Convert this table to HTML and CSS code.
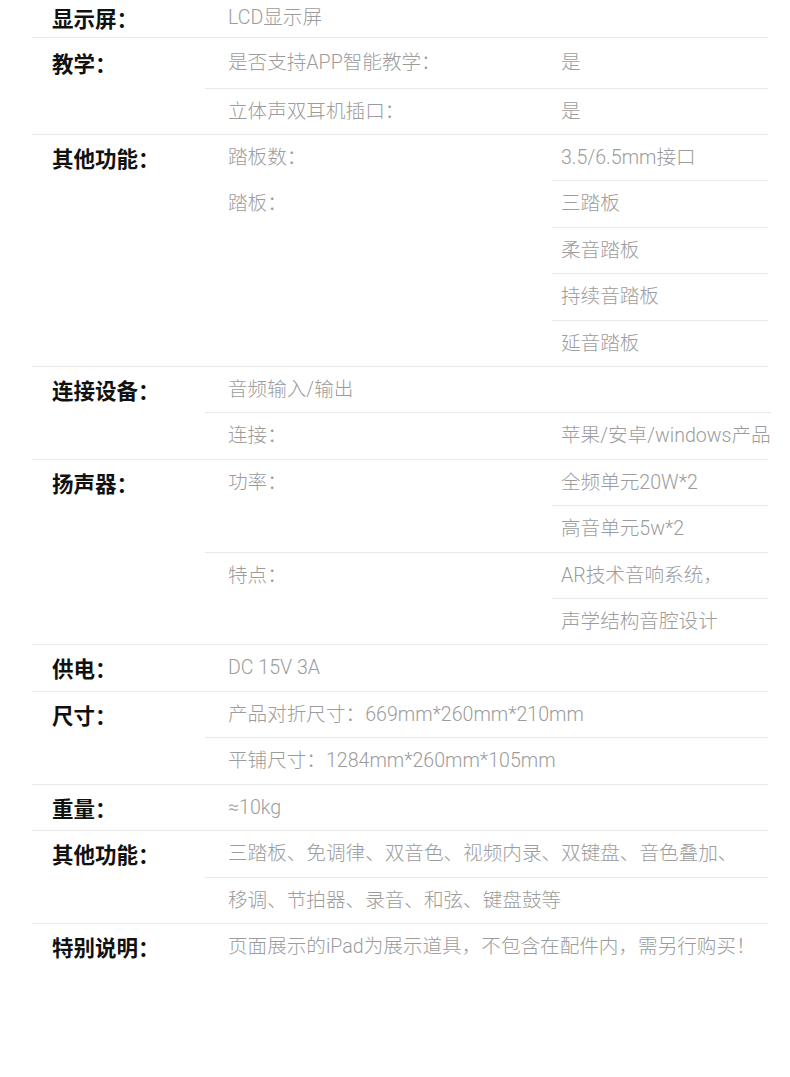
FILE: index.html
```html
<!DOCTYPE html>
<html lang="zh-CN">
<head>
<meta charset="utf-8">
<title>产品参数</title>
<link rel="stylesheet" href="styles.css">
</head>
<body>
<div class="spec">
  <section class="group g-first">
    <div class="label">显示屏：</div>
    <div class="body">
      <div class="row"><div class="k wide">LCD显示屏</div></div>
    </div>
  </section>

  <section class="group g-tall">
    <div class="label">教学：</div>
    <div class="body">
      <div class="row">
        <div class="keys"><div class="k">是否支持APP智能教学：</div></div>
        <div class="vals"><div class="v">是</div></div>
      </div>
      <div class="row">
        <div class="keys"><div class="k">立体声双耳机插口：</div></div>
        <div class="vals"><div class="v">是</div></div>
      </div>
    </div>
  </section>

  <section class="group">
    <div class="label">其他功能：</div>
    <div class="body">
      <div class="row">
        <div class="keys"><div class="k">踏板数：</div><div class="k">踏板：</div></div>
        <div class="vals">
          <div class="v">3.5/6.5mm接口</div>
          <div class="v">三踏板</div>
          <div class="v">柔音踏板</div>
          <div class="v">持续音踏板</div>
          <div class="v">延音踏板</div>
        </div>
      </div>
    </div>
  </section>

  <section class="group">
    <div class="label">连接设备：</div>
    <div class="body">
      <div class="row"><div class="k wide">音频输入/输出</div></div>
      <div class="row">
        <div class="keys"><div class="k">连接：</div></div>
        <div class="vals"><div class="v">苹果/安卓/windows产品</div></div>
      </div>
    </div>
  </section>

  <section class="group">
    <div class="label">扬声器：</div>
    <div class="body">
      <div class="row">
        <div class="keys"><div class="k">功率：</div></div>
        <div class="vals">
          <div class="v">全频单元20W*2</div>
          <div class="v">高音单元5w*2</div>
        </div>
      </div>
      <div class="row">
        <div class="keys"><div class="k">特点：</div></div>
        <div class="vals">
          <div class="v">AR技术音响系统，</div>
          <div class="v">声学结构音腔设计</div>
        </div>
      </div>
    </div>
  </section>

  <section class="group">
    <div class="label">供电：</div>
    <div class="body">
      <div class="row"><div class="k wide">DC 15V 3A</div></div>
    </div>
  </section>

  <section class="group">
    <div class="label">尺寸：</div>
    <div class="body">
      <div class="row"><div class="k wide">产品对折尺寸：669mm*260mm*210mm</div></div>
      <div class="row"><div class="k wide">平铺尺寸：1284mm*260mm*105mm</div></div>
    </div>
  </section>

  <section class="group">
    <div class="label">重量：</div>
    <div class="body">
      <div class="row"><div class="k wide">≈10kg</div></div>
    </div>
  </section>

  <section class="group">
    <div class="label">其他功能：</div>
    <div class="body">
      <div class="row"><div class="k wide">三踏板、免调律、双音色、视频内录、双键盘、音色叠加、</div></div>
      <div class="row"><div class="k wide">移调、节拍器、录音、和弦、键盘鼓等</div></div>
    </div>
  </section>

  <section class="group g-last">
    <div class="label">特别说明：</div>
    <div class="body">
      <div class="row"><div class="k wide">页面展示的iPad为展示道具，不包含在配件内，需另行购买！</div></div>
    </div>
  </section>
</div>
</body>
</html>
```

FILE: styles.css
```css
html, body {
  margin: 0;
  padding: 0;
  background: #ffffff;
}

body {
  font-family: "Noto Sans CJK SC", "Noto Sans", sans-serif;
  overflow: hidden;
}

.spec {
  margin: 0 22px 0 32px;
  --lh: 45.4px;
}

.group {
  display: flex;
  border-bottom: 1px solid #e9e9e9;
}

.g-last {
  border-bottom: none;
}

.label {
  flex: none;
  width: 153px;
  padding-left: 20px;
  font-size: 21.5px;
  font-weight: 700;
  color: #111111;
  line-height: var(--lh);
  white-space: nowrap;
}

.body {
  flex: 1;
  display: flex;
  flex-direction: column;
}

.row {
  display: flex;
  border-bottom: 1px solid #e9e9e9;
}

.row:last-child {
  border-bottom: none;
}

.keys {
  flex: none;
  width: 324px;
  padding-left: 23px;
  display: flex;
  flex-direction: column;
}

.k,
.v {
  font-family: Roboto, "Noto Sans CJK SC", sans-serif;
  font-size: 19.6px;
  font-weight: 300;
  color: #9c9c9c;
  line-height: var(--lh);
  white-space: nowrap;
}

.k + .k {
  margin-top: 1px;
}

.k.wide {
  padding-left: 23px;
  flex: 1;
}

.vals {
  flex: 1;
  display: flex;
  flex-direction: column;
}

.v {
  padding-left: 9px;
  border-bottom: 1px solid #e9e9e9;
}

.v:last-child {
  border-bottom: none;
}

.g-first {
  --lh: 37px;
}

.g-first .label,
.g-first .k {
  line-height: 35px;
  padding-bottom: 2px;
}

.g-tall .label,
.g-tall .row:first-child .k,
.g-tall .row:first-child .v {
  line-height: 49.6px;
}
```
